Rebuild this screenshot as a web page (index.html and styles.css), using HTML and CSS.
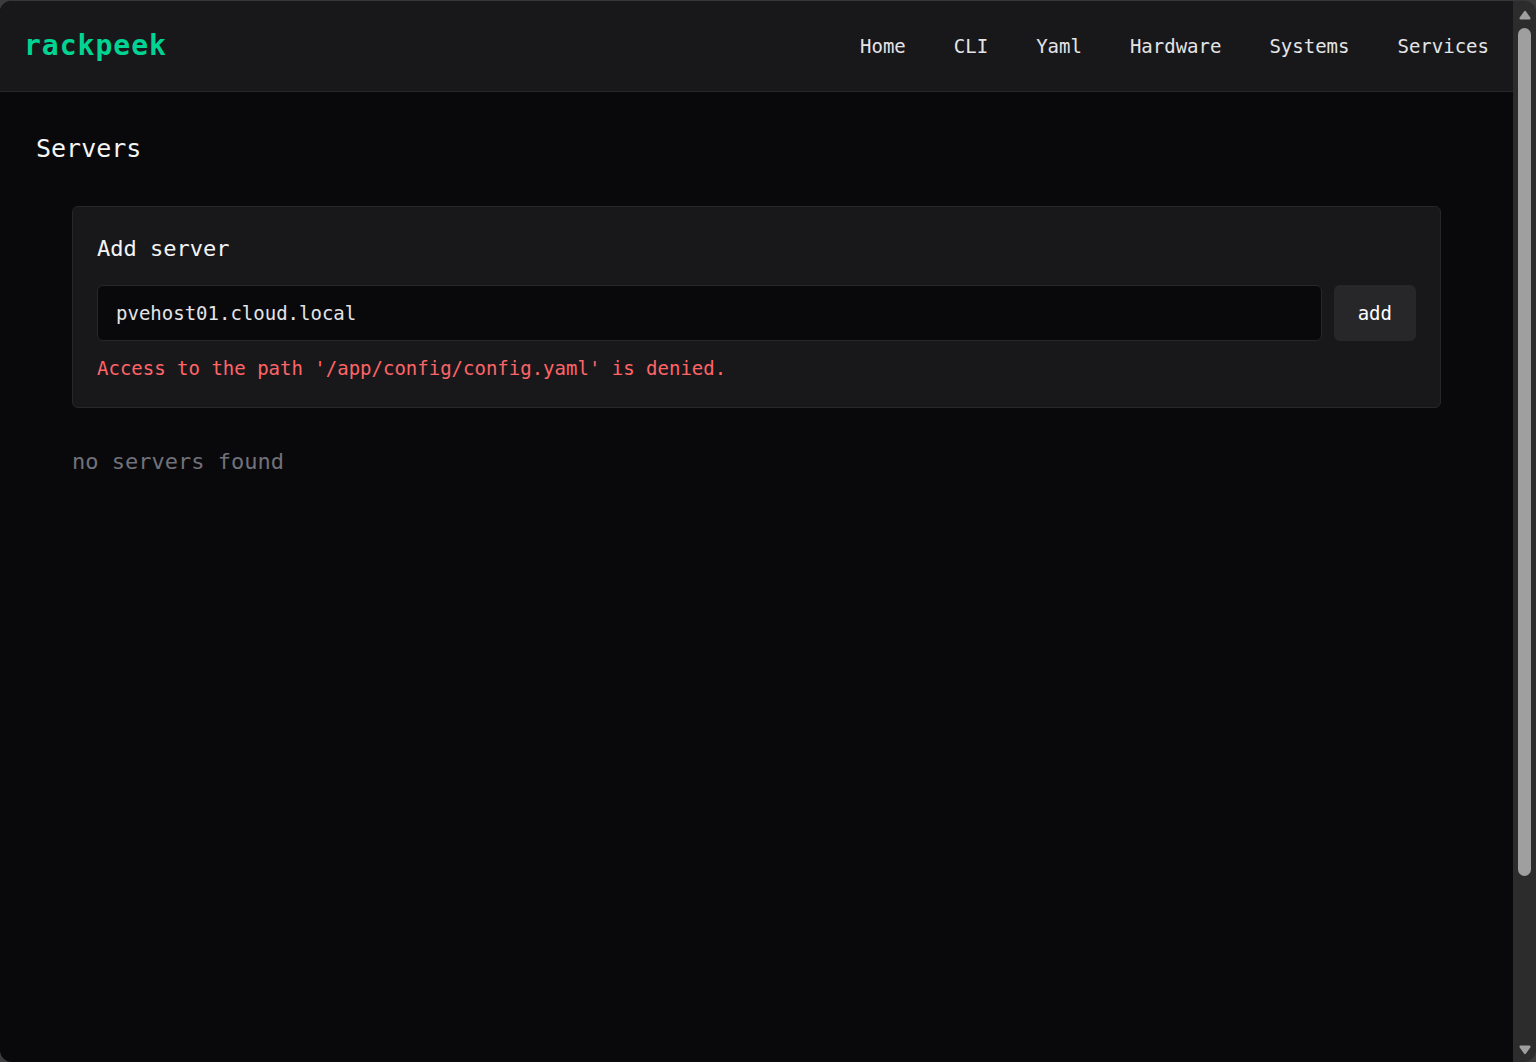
FILE: index.html
```html
<!DOCTYPE html>
<html lang="en">
<head>
  <meta charset="UTF-8" />
  <title>rackpeek - Servers</title>
  <meta name="viewport" content="width=device-width, initial-scale=1.0">
  <link rel="stylesheet" href="styles.css">
</head>
<body>
  <div class="window">
    <div class="page">
      <header class="topbar">
        <a class="brand" href="#">rackpeek</a>
        <nav class="nav">
          <a href="#">Home</a>
          <a href="#">CLI</a>
          <a href="#">Yaml</a>
          <a href="#">Hardware</a>
          <a href="#">Systems</a>
          <a href="#">Services</a>
        </nav>
      </header>

      <main class="content">
        <h1>Servers</h1>

        <div class="servers">
          <form class="card">
            <h2><label for="server-name">Add server</label></h2>
            <div class="add-row">
              <input type="text" id="server-name" name="name" value="pvehost01.cloud.local" autocomplete="off" spellcheck="false">
              <button type="button">add</button>
            </div>
            <p class="error">Access to the path '/app/config/config.yaml' is denied.</p>
          </form>

          <p class="empty">no servers found</p>
        </div>
      </main>
    </div>

    <!-- Scrollbar -->
    <div class="scrollbar" aria-hidden="true">
      <svg class="arrow" width="12" height="10" viewBox="0 0 12 10"><path d="M5 1.4Q6 0 7 1.4L11.3 7.6Q12 9.4 10.4 9.5H1.6Q0 9.4 .7 7.6Z"/></svg>
      <div class="track"><div class="thumb"></div></div>
      <svg class="arrow" width="12" height="10" viewBox="0 0 12 10"><path d="M5 8.6Q6 10 7 8.6L11.3 2.4Q12 .6 10.4 .5H1.6Q0 .6 .7 2.4Z"/></svg>
    </div>
  </div>
</body>
</html>
```

FILE: styles.css
```css
* {
  box-sizing: border-box;
}

body {
  margin: 0;
  background-color: #3c3c3c;
  color: #f4f4f5;
  font-family: "DejaVu Sans Mono", "Liberation Mono", monospace;
  font-size: 19px;
  line-height: 30px;
}

h1, h2, p {
  margin: 0;
  font-weight: normal;
}

a {
  color: inherit;
  text-decoration: none;
}

.window {
  display: flex;
  min-height: 100vh;
  border-top: 1px solid #363738;
  border-radius: 12px;
  overflow: hidden;
}

.page {
  flex: 1;
  background-color: #09090b;
}

.topbar {
  display: flex;
  align-items: center;
  justify-content: space-between;
  padding: 24px;
  background-color: #18181b;
  border-bottom: 1px solid #27272a;
}

.brand {
  color: #00d492;
  font-size: 28px;
  font-weight: bold;
  line-height: 42px;
  letter-spacing: 1px;
}

.nav {
  display: flex;
  gap: 48px;
  color: #e4e4e7;
}

.nav a:hover {
  color: #00d492;
}

.content {
  padding: 36px;
}

h1 {
  font-size: 25px;
  line-height: 42px;
}

.servers {
  padding: 36px;
}

.card {
  padding: 24px;
  background-color: #18181b;
  border: 1px solid #27272a;
  border-radius: 6px;
}

h2 {
  margin-bottom: 18px;
  font-size: 22px;
  line-height: 36px;
}

.add-row {
  display: flex;
  gap: 12px;
}

.add-row input,
.add-row button {
  height: 56px;
  border-radius: 6px;
  font: inherit;
}

.add-row input {
  flex: 1;
  min-width: 0;
  padding: 0 18px;
  background-color: #09090b;
  border: 1px solid #27272a;
  color: #e4e4e7;
  outline: none;
}

.add-row button {
  padding: 0 24px;
  background-color: #27272a;
  border: none;
  color: #fff;
  cursor: pointer;
}

.add-row button:hover {
  background-color: #3f3f46;
}

.error {
  margin-top: 12px;
  color: #ff6467;
}

.empty {
  margin-top: 36px;
  color: #71717b;
  font-size: 22px;
  line-height: 36px;
}

/* Scrollbar */
.scrollbar {
  display: flex;
  flex-direction: column;
  align-items: center;
  gap: 8px;
  width: 23px;
  padding: 9px 0 7px;
  background-color: #2c2c2c;
}

.arrow {
  fill: #9f9f9f;
}

.track {
  flex: 1;
}

.thumb {
  width: 13px;
  height: 84%;
  background-color: #9f9f9f;
  border-radius: 7px;
}
```
